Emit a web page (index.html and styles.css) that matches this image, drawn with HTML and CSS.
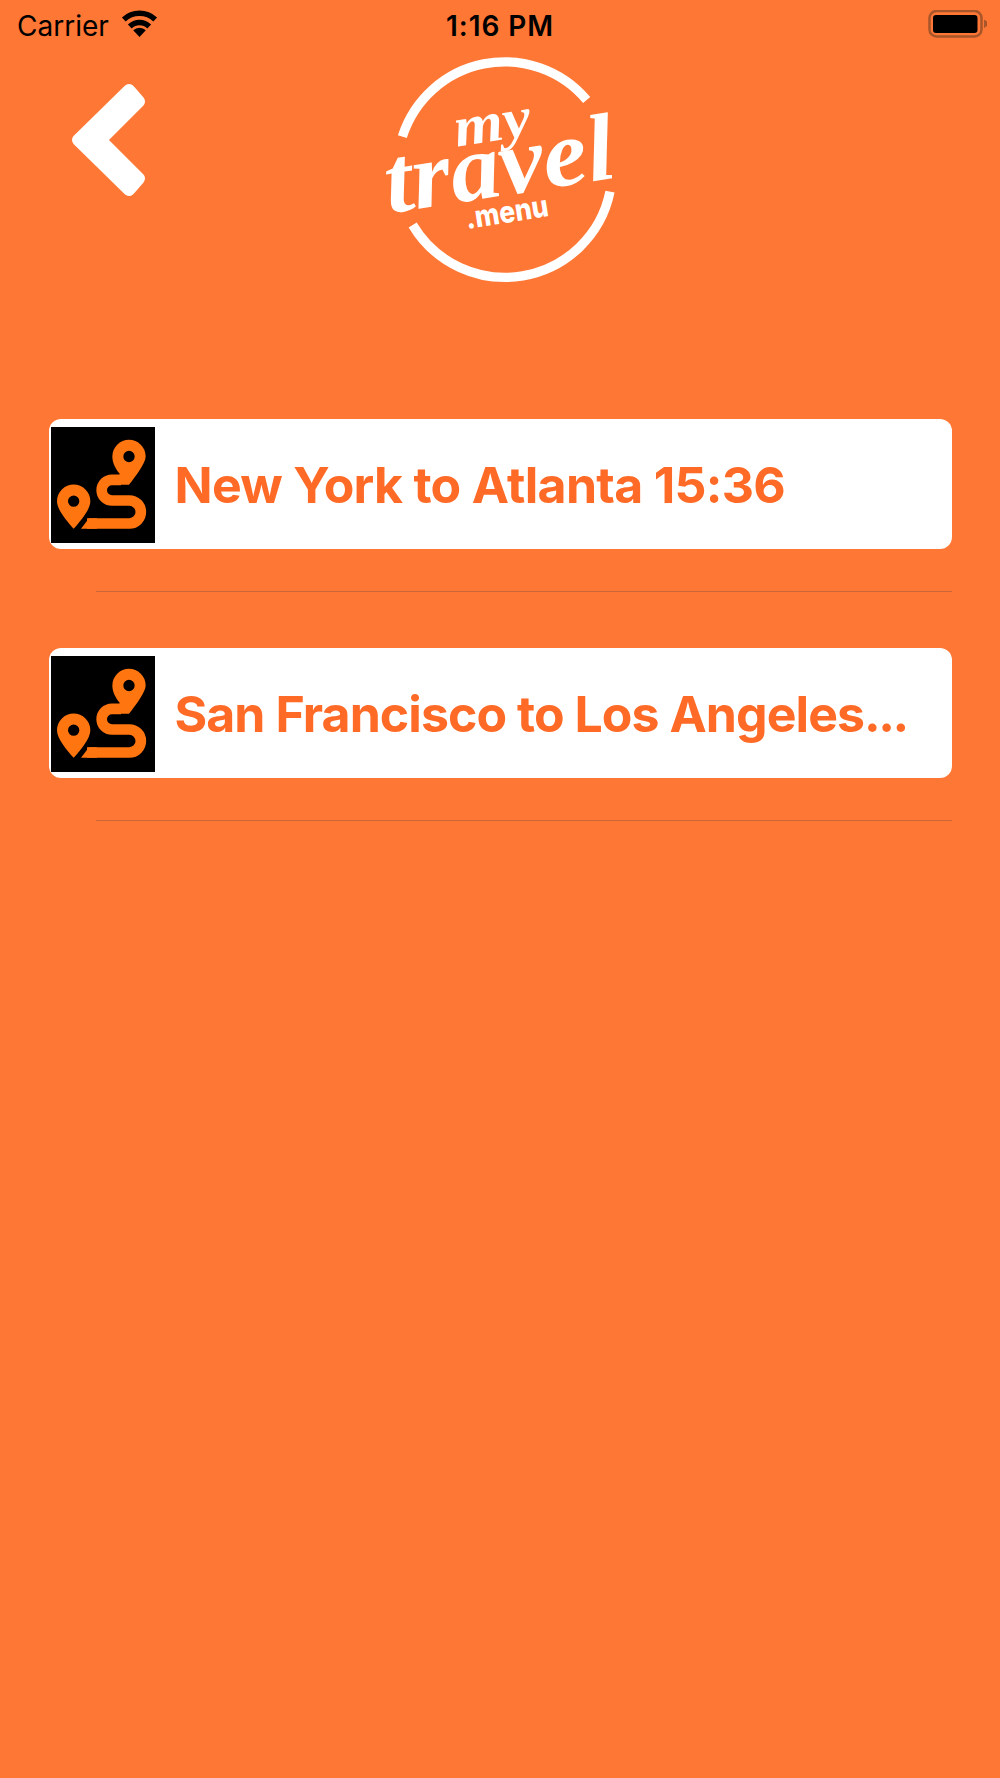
FILE: index.html
```html
<!DOCTYPE html>
<html lang="en">
<head>
<meta charset="utf-8">
<title>My Travel Menu</title>
<link rel="stylesheet" href="styles.css">
</head>
<body>
<div class="status">
  <div class="status-left">
    <span class="carrier">Carrier</span>
    <svg class="wifi" viewBox="0 0 37 27"><path d="M18.500 27 L12.200 20.200 A9 9 0 0 1 24.800 20.200 Z"/><path d="M8.800 16.400 A14 14 0 0 1 28.200 16.400" class="wifi-arc"/><path d="M2.800 9.400 A23 23 0 0 1 34.200 9.400" class="wifi-arc"/></svg>
  </div>
  <span class="time">1:16 PM</span>
  <svg class="battery" viewBox="0 0 60 28"><rect x="1.500" y="1" width="52" height="25.500" rx="7" class="batt-shell"/><rect x="5" y="5" width="44.500" height="18" rx="3" class="batt-fill"/><path d="M56 9.500 L59 11.500 V16 L56 18 Z" class="batt-cap"/></svg>
</div>
<header class="head">
  <svg class="back" viewBox="60 70 100 140"><path class="back-shape" d="M129 90 L139 101.500 L100.500 140 L139 178.500 L129 190 L78 140 Z"/></svg>
  <svg class="logo" viewBox="0 0 840 750">
    <path class="ring" d="M127 290 A322 322 0 0 1 680 180"/>
    <path class="ring" d="M750 455 A322 322 0 0 1 158 555"/>
    <text class="logo-my" x="290" y="320" transform="rotate(-9 290 320)" textLength="232" lengthAdjust="spacingAndGlyphs">my</text>
    <text class="logo-travel" x="88" y="520" transform="rotate(-9 88 520)" textLength="695" lengthAdjust="spacingAndGlyphs">travel</text>
    <text class="logo-menu" x="322" y="567" transform="rotate(-9 322 567)" textLength="250" lengthAdjust="spacingAndGlyphs">.menu</text>
  </svg>
</header>
<main class="list">
  <div class="row">
    <div class="card">
      <div class="thumb"><svg class="route" viewBox="62 65 312 347"><use href="#routeart"/></svg></div>
      <span class="label">New York to Atlanta 15:36</span>
    </div>
    <div class="sep"></div>
  </div>
  <div class="row">
    <div class="card">
      <div class="thumb"><svg class="route" viewBox="62 65 312 347"><use href="#routeart"/></svg></div>
      <span class="label label-long">San Francisco to Los Angeles<span class="dots">...</span></span>
    </div>
    <div class="sep"></div>
  </div>
</main>
<svg class="defs" width="0" height="0">
  <defs>
    <g id="routeart">
      <path class="route-line" d="M170 354 H297 A34.500 34.500 0 0 0 297 285 H245 A31 31 0 0 1 245 223 H272"/>
      <path class="route-fill" d="M152 370 L176 338 H200 V370 Z"/>
      <path class="route-fill" fill-rule="evenodd" d="M296 103 A50 50 0 0 1 346 153 C346 172 318 210 296 238 H262 L268 205 C256 190 246 172 246 153 A50 50 0 0 1 296 103 Z M296 136 A17 17 0 1 0 296 170 A17 17 0 1 0 296 136 Z"/>
      <path class="route-fill" fill-rule="evenodd" d="M130 237 A50 50 0 0 1 180 287 C180 312 152 345 130 370 C108 345 80 312 80 287 A50 50 0 0 1 130 237 Z M130 270 A17 17 0 1 0 130 304 A17 17 0 1 0 130 270 Z"/>
    </g>
  </defs>
</svg>
</body>
</html>
```
FILE: styles.css
```css
* { box-sizing: border-box; }
html, body { margin: 0; padding: 0; }
body {
  width: 1000px;
  height: 1778px;
  background: #ff7734;
  font-family: Inter, "Liberation Sans", sans-serif;
  overflow: hidden;
}
.status {
  height: 50px;
  padding: 10px 17px 0;
  display: grid;
  grid-template-columns: 1fr auto 1fr;
  align-items: start;
  color: #000;
}
.status-left { display: flex; align-items: flex-start; gap: 12px; }
.carrier { font-size: 28px; line-height: 32px; }
.wifi { width: 37px; height: 27px; }
.wifi path { fill: #000; }
.wifi .wifi-arc { fill: none; stroke: #000; stroke-width: 5.500px; }
.time { font-size: 28px; line-height: 32px; font-weight: 600; letter-spacing: 0.9px; }
.battery { width: 60px; height: 28px; justify-self: end; margin-right: -5px; }
.batt-shell { fill: none; stroke: #a8562a; stroke-width: 2.500px; }
.batt-fill { fill: #000; }
.batt-cap { fill: #a8562a; }
.head {
  height: 369px;
  position: relative;
  display: flex;
  justify-content: center;
}
.back { position: absolute; left: 60px; top: 20px; width: 100px; height: 140px; }
.back-shape { fill: #fff; stroke: #fff; stroke-width: 12px; stroke-linejoin: round; }
.logo { width: 280px; height: 250px; margin: -10px 0 0 0; }
.ring { fill: none; stroke: #fff; stroke-width: 28px; }
.logo-my { font-family: "Liberation Serif", serif; font-style: italic; font-weight: 700; font-size: 170px; fill: #fff; }
.logo-travel { font-family: "Liberation Serif", serif; font-style: italic; font-weight: 700; font-size: 285px; fill: #fff; }
.logo-menu { font-family: Inter, sans-serif; font-weight: 800; font-size: 90px; fill: #fff; }
.list { padding: 0 48.500px; }
.row { height: 229px; }
.card {
  height: 130px;
  background: #fff;
  border-radius: 12px;
  display: flex;
  align-items: center;
  padding: 2px 2px 0;
  gap: 20px;
}
.thumb { width: 104px; height: 116px; background: #000; flex: none; display: flex; }
.route { width: 104px; height: 116px; }
.route-fill { fill: #ff7510; }
.route-line { fill: none; stroke: #ff7510; stroke-width: 32px; }
.label { font-size: 50px; font-weight: 700; letter-spacing: -0.7px; color: #ff6a26; white-space: nowrap; }
.label-long { letter-spacing: -0.95px; }
.dots { letter-spacing: -2.500px; }
.sep { margin: 42px 0 0 47px; height: 1px; background: #c9663a; }
.defs { position: absolute; }
```
